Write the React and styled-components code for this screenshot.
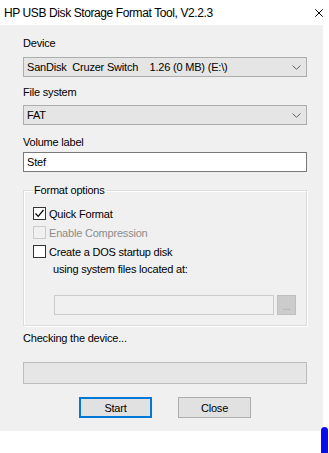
import React from "react";
import styled, { createGlobalStyle } from "styled-components";

const GlobalStyle = createGlobalStyle`
  html, body {
    margin: 0;
    padding: 0;
    background: #ffffff;
  }
  body {
    font-family: "Liberation Sans", Arial, sans-serif;
    color: #000;
  }
`;

const Page = styled.div`
  position: relative;
  width: 329px;
  height: 453px;
  overflow: hidden;
  background: #ffffff;
`;

const Window = styled.div`
  width: 323px;
  display: flex;
  flex-direction: column;
`;

const TitleBar = styled.div`
  height: 25px;
  background: #ffffff;
  display: flex;
  align-items: center;
  justify-content: space-between;
  padding: 1px 0 0 4px;
  box-sizing: border-box;
  font-size: 12px;
  letter-spacing: -0.4px;
  color: #000;
`;

const Body = styled.div`
  background: #f0f0f0;
  padding: 11px 16px 13px 23px;
  display: flex;
  flex-direction: column;
  font-size: 11px;
  letter-spacing: -0.2px;
`;

const Label = styled.div`
  height: 14px;
  line-height: 14px;
  margin-top: ${(p) => p.$mt || 0}px;
  color: ${(p) => (p.$disabled ? "#8c8c8c" : "#000")};
`;

const Combo = styled.div`
  box-sizing: border-box;
  height: 20px;
  margin-top: ${(p) => p.$mt || 0}px;
  background: #e5e5e5;
  border: 1px solid #adadad;
  display: flex;
  align-items: center;
  justify-content: space-between;
  padding: 0 5px 0 3px;
  white-space: pre;
`;

const TextBox = styled.div`
  box-sizing: border-box;
  height: 20px;
  margin-top: ${(p) => p.$mt || 0}px;
  background: ${(p) => (p.$disabled ? "#f0f0f0" : "#ffffff")};
  border: 1px solid ${(p) => (p.$disabled ? "#cccccc" : "#7a7a7a")};
  display: flex;
  align-items: center;
  padding: 0 3px;
  flex: ${(p) => (p.$grow ? 1 : "none")};
`;

const Group = styled.fieldset`
  margin: 11px 0 0 0;
  padding: 0 10px 10px 9px;
  border: 1px solid #dcdcdc;
  box-shadow: inset 1px 1px 0 #ffffff, 1px 1px 0 #ffffff;
  display: flex;
  flex-direction: column;
  min-width: 0;

  legend {
    padding: 0 1px;
    height: 14px;
    line-height: 14px;
  }
`;

const CheckRow = styled.div`
  height: 19px;
  display: flex;
  align-items: center;
  gap: 3px;
  margin-top: ${(p) => p.$mt || 0}px;
  color: ${(p) => (p.$disabled ? "#8c8c8c" : "#000")};
`;

const Box = styled.span`
  box-sizing: border-box;
  width: 13px;
  height: 13px;
  border: 1px solid ${(p) => (p.$disabled ? "#cccccc" : "#333333")};
  background: ${(p) => (p.$disabled ? "transparent" : "#ffffff")};
  display: flex;
  align-items: center;
  justify-content: center;
`;

const SubText = styled.div`
  height: 16px;
  line-height: 16px;
  padding-left: 20px;
`;

const PathRow = styled.div`
  display: flex;
  gap: 3px;
  margin-top: 18px;
  padding-left: 21px;
`;

const BrowseButton = styled.div`
  box-sizing: border-box;
  width: 19px;
  height: 20px;
  background: #cccccc;
  border: 1px solid #bfbfbf;
  color: #a3a3a3;
  font-size: 10px;
  display: flex;
  align-items: flex-end;
  justify-content: center;
  line-height: 14px;
`;

const Progress = styled.div`
  box-sizing: border-box;
  height: 22px;
  margin-top: 17px;
  background: #e6e6e6;
  border: 1px solid #bcbcbc;
`;

const ButtonRow = styled.div`
  display: flex;
  justify-content: center;
  gap: 26px;
  margin-top: 13px;
`;

const Button = styled.div`
  box-sizing: border-box;
  width: 73px;
  height: 21px;
  background: #e1e1e1;
  border: ${(p) => (p.$default ? "2px solid #0078d7" : "1px solid #adadad")};
  display: flex;
  align-items: center;
  justify-content: center;
  font-size: 11px;
`;

const Blip = styled.div`
  position: absolute;
  left: 321px;
  top: 427px;
  width: 7px;
  height: 30px;
  border-radius: 4px;
  background: #0a0af0;
`;

const Chevron = () => (
  <svg width="9" height="5" viewBox="0 0 9 5">
    <path d="M0.5 0.5 L4.5 4.3 L8.5 0.5" fill="none" stroke="#606060" strokeWidth="1" />
  </svg>
);

const CloseX = () => (
  <svg width="8" height="8" viewBox="0 0 8 8">
    <path d="M0.3 0.3 L7.7 7.7 M7.7 0.3 L0.3 7.7" stroke="#000" strokeWidth="1" />
  </svg>
);

const Check = () => (
  <svg width="11" height="11" viewBox="0 0 11 11">
    <path d="M1.5 5.5 L4.2 8.3 L9.5 2" fill="none" stroke="#000" strokeWidth="1.2" />
  </svg>
);

export default function App() {
  return (
    <>
      <GlobalStyle />
      <Page>
        <Window>
          <TitleBar>
            <span>HP USB Disk Storage Format Tool, V2.2.3</span>
            <CloseX />
          </TitleBar>
          <Body>
            <Label>Device</Label>
            <Combo $mt={7}>
              <span>{"SanDisk  Cruzer Switch    1.26 (0 MB) (E:\\)"}</span>
              <Chevron />
            </Combo>
            <Label $mt={8}>File system</Label>
            <Combo $mt={6}>
              <span>FAT</span>
              <Chevron />
            </Combo>
            <Label $mt={10}>Volume label</Label>
            <TextBox $mt={3}>Stef</TextBox>
            <Group>
              <legend>Format options</legend>
              <CheckRow $mt={7}>
                <Box>
                  <Check />
                </Box>
                Quick Format
              </CheckRow>
              <CheckRow $disabled>
                <Box $disabled />
                Enable Compression
              </CheckRow>
              <CheckRow>
                <Box />
                Create a DOS startup disk
              </CheckRow>
              <SubText>using system files located at:</SubText>
              <PathRow>
                <TextBox $disabled $grow />
                <BrowseButton>...</BrowseButton>
              </PathRow>
            </Group>
            <Label $mt={5}>Checking the device...</Label>
            <Progress />
            <ButtonRow>
              <Button $default>Start</Button>
              <Button>Close</Button>
            </ButtonRow>
          </Body>
        </Window>
        <Blip />
      </Page>
    </>
  );
}
